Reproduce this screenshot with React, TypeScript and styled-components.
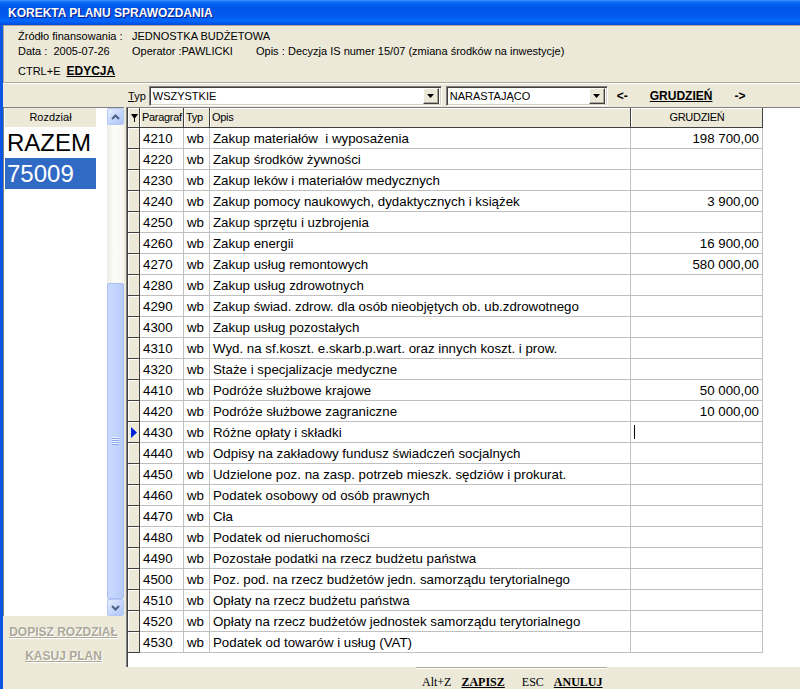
import React from 'react';
import styled, { createGlobalStyle } from 'styled-components';

const GlobalStyle = createGlobalStyle`
  html, body {
    margin: 0;
    padding: 0;
    background: #ece9d8;
    overflow: hidden;
  }
  * {
    box-sizing: border-box;
  }
`;

const SANS = `"Liberation Sans", Arial, sans-serif`;
const SERIF = `"Liberation Serif", "Times New Roman", serif`;

const Window = styled.div`
  width: 800px;
  height: 689px;
  display: flex;
  flex-direction: column;
  background: #ece9d8;
  font-family: ${SANS};
  color: #000;
  overflow: hidden;
`;

const TitleBar = styled.div`
  height: 25px;
  flex-shrink: 0;
  display: flex;
  align-items: center;
  padding-left: 8px;
  color: #fff;
  font-size: 12px;
  font-weight: bold;
  text-shadow: 1px 1px 0 #0a1883;
  background: linear-gradient(
    to bottom,
    #3d95ff 0%,
    #0a6af5 8%,
    #0055e8 30%,
    #0058ee 60%,
    #0466fb 85%,
    #0048d8 100%
  );
`;

const Body = styled.div`
  flex: 1;
  display: flex;
  flex-direction: column;
  border-left: 3px solid #0b55e4;
  min-height: 0;
`;

const InfoPanel = styled.div`
  height: 58px;
  flex-shrink: 0;
  border-top: 1px solid #aca899;
  border-left: 1px solid #aca899;
  border-bottom: 1px solid #aca899;
  box-shadow: 0 1px 0 #fff;
  padding: 3px 0 0 14px;
  font-size: 11px;
`;

const InfoRow = styled.div`
  display: grid;
  grid-template-columns: 114px 124px 32px auto;
  height: 15px;
  line-height: 15px;
  white-space: pre;
`;

const ShortcutRow = styled.div`
  display: flex;
  gap: 6px;
  height: 15px;
  line-height: 15px;
  margin-top: 5px;
`;

const ShortcutKey = styled.span`
  font-weight: bold;
  text-decoration: underline;
  font-size: 12px;
`;

const FilterBar = styled.div`
  height: 24px;
  flex-shrink: 0;
  display: flex;
  align-items: center;
  padding: 2px 0 0 125px;
  font-size: 11px;
`;

const Label = styled.span`
  margin-right: 3px;
  & u {
    text-decoration: underline;
  }
`;

const Combo = styled.div<{ $width: number }>`
  width: ${({ $width }) => $width}px;
  height: 20px;
  margin-right: 4px;
  display: flex;
  align-items: center;
  background: #fff;
  border-top: 1px solid #808080;
  border-left: 1px solid #808080;
  border-bottom: 1px solid #fff;
  border-right: 1px solid #fff;
  box-shadow: inset 1px 1px 0 #404040, inset -1px -1px 0 #d4d0c8;
`;

const ComboText = styled.span`
  flex: 1;
  padding-left: 3px;
`;

const ComboButton = styled.div`
  width: 16px;
  height: 16px;
  margin-right: 2px;
  background: #ece9d8;
  border-top: 1px solid #fff;
  border-left: 1px solid #fff;
  border-right: 1px solid #404040;
  border-bottom: 1px solid #404040;
  box-shadow: inset -1px -1px 0 #aca899;
  display: flex;
  align-items: center;
  justify-content: center;
`;

const NavArrow = styled.span<{ $ml: number }>`
  margin-left: ${({ $ml }) => $ml}px;
  font-size: 12px;
  font-weight: bold;
`;

const NavMonth = styled.span`
  margin-left: 22px;
  font-size: 12px;
  font-weight: bold;
  text-decoration: underline;
`;

const Main = styled.div`
  flex: 1;
  display: flex;
  min-height: 0;
`;

const LeftColumn = styled.div`
  width: 121px;
  margin-right: 2px;
  display: flex;
  flex-direction: column;
`;

const ListBox = styled.div`
  height: 509px;
  display: flex;
  background: #fff;
  border-top: 1px solid #808080;
  border-left: 1px solid #808080;
`;

const ListContent = styled.div`
  flex: 1;
  padding-left: 1px;
`;

const ListHeader = styled.div`
  width: 91px;
  height: 19px;
  line-height: 18px;
  text-align: center;
  font-size: 11px;
  background: #ece9d8;
`;

const ListItem = styled.div<{ $selected?: boolean }>`
  width: 91px;
  height: 31px;
  line-height: 31px;
  padding-left: 2px;
  font-size: 24px;
  background: ${({ $selected }) => ($selected ? '#316ac5' : 'transparent')};
  color: ${({ $selected }) => ($selected ? '#fff' : '#000')};
`;

const ScrollBar = styled.div`
  width: 17px;
  display: flex;
  flex-direction: column;
  background: linear-gradient(to right, #eeede5, #fcfcfa 40%, #f7f6f1);
`;

const ScrollButton = styled.div`
  height: 17px;
  flex-shrink: 0;
  border: 1px solid #b4c8f6;
  border-radius: 2px;
  background: linear-gradient(to bottom right, #e6eefc, #c1d3fb 60%, #b0c6f7);
  display: flex;
  align-items: center;
  justify-content: center;
`;

const Track = styled.div`
  flex: 1;
  display: flex;
  flex-direction: column;
`;

const TrackSpace = styled.div`
  height: 158px;
  flex-shrink: 0;
`;

const Thumb = styled.div`
  flex: 1;
  border: 1px solid #a8bef4;
  border-radius: 2px;
  background: linear-gradient(to right, #cad8fc, #c3d4fd 50%, #b7caf8);
  display: flex;
  align-items: center;
  justify-content: center;
`;

const Grip = styled.div`
  width: 7px;
  height: 8px;
  background: repeating-linear-gradient(
    to bottom,
    #eef3fe 0px,
    #eef3fe 1px,
    #8aa6e8 1px,
    #8aa6e8 2px
  );
`;

const SideActions = styled.div`
  display: flex;
  flex-direction: column;
  align-items: center;
  padding-top: 9px;
  gap: 10px;
`;

const DisabledAction = styled.span`
  font-size: 12px;
  font-weight: bold;
  text-decoration: underline;
  color: #aca899;
  text-shadow: 1px 1px 0 #fff;
  line-height: 14px;
`;

const RightColumn = styled.div`
  flex: 1;
  display: flex;
  flex-direction: column;
  min-width: 0;
`;

const GridPane = styled.div`
  height: 560px;
  flex-shrink: 0;
  background: #fff;
  border-top: 1px solid #808080;
  border-left: 1px solid #808080;
  box-shadow: inset 1px 0 0 #404040;
  padding-left: 1px;
  overflow: hidden;
`;

const Row = styled.div`
  display: grid;
  grid-template-columns: 12px 44px 26px 421px 132px 1fr;
  height: 21px;
  font-size: 13.3px;
`;

const HeaderRow = styled(Row)`
  height: 20px;
  font-size: 11px;
  letter-spacing: -0.3px;
`;

const HeaderCell = styled.div<{ $center?: boolean }>`
  background: #ece9d8;
  border-right: 1px solid #404040;
  border-bottom: 1px solid #404040;
  box-shadow: inset 1px 1px 0 #fff;
  padding: 0 1px 0 2px;
  line-height: 19px;
  white-space: nowrap;
  overflow: hidden;
  display: flex;
  align-items: center;
  justify-content: ${({ $center }) => ($center ? 'center' : 'flex-start')};
`;

const Indicator = styled.div`
  background: #ece9d8;
  border-right: 1px solid #404040;
  border-bottom: 1px solid #404040;
  box-shadow: inset 1px 1px 0 #fff;
  display: flex;
  align-items: center;
  justify-content: center;
`;

const Cell = styled.div<{ $right?: boolean }>`
  border-right: 1px solid #c0c0c0;
  border-bottom: 1px solid #c0c0c0;
  padding: 1px 3px 0;
  line-height: 19px;
  white-space: pre;
  overflow: hidden;
  text-align: ${({ $right }) => ($right ? 'right' : 'left')};
`;

const Filler = styled.div`
  background: #fff;
`;

const Caret = styled.span`
  display: inline-block;
  width: 1px;
  height: 14px;
  background: #000;
  vertical-align: middle;
  margin-top: -2px;
`;

const Footer = styled.div`
  flex: 1;
  padding-left: 290px;
`;

const FooterGroup = styled.div`
  width: 191px;
  border-top: 1px solid #aca899;
  box-shadow: inset 0 1px 0 #fff;
  padding: 7px 0 0 6px;
  display: flex;
  font-family: ${SERIF};
  font-size: 12px;
`;

const FooterText = styled.span<{ $ml?: number }>`
  margin-left: ${({ $ml }) => $ml ?? 0}px;
`;

const FooterKey = styled.span<{ $ml: number }>`
  margin-left: ${({ $ml }) => $ml}px;
  font-weight: bold;
  text-decoration: underline;
`;

type Line = { code: string; name: string; value?: string };

const rows: Line[] = [
  { code: '4210', name: 'Zakup materiałów  i wyposażenia', value: '198 700,00' },
  { code: '4220', name: 'Zakup środków żywności' },
  { code: '4230', name: 'Zakup leków i materiałów medycznych' },
  { code: '4240', name: 'Zakup pomocy naukowych, dydaktycznych i książek', value: '3 900,00' },
  { code: '4250', name: 'Zakup sprzętu i uzbrojenia' },
  { code: '4260', name: 'Zakup energii', value: '16 900,00' },
  { code: '4270', name: 'Zakup usług remontowych', value: '580 000,00' },
  { code: '4280', name: 'Zakup usług zdrowotnych' },
  { code: '4290', name: 'Zakup świad. zdrow. dla osób nieobjętych ob. ub.zdrowotnego' },
  { code: '4300', name: 'Zakup usług pozostałych' },
  { code: '4310', name: 'Wyd. na sf.koszt. e.skarb.p.wart. oraz innych koszt. i prow.' },
  { code: '4320', name: 'Staże i specjalizacje medyczne' },
  { code: '4410', name: 'Podróże służbowe krajowe', value: '50 000,00' },
  { code: '4420', name: 'Podróże służbowe zagraniczne', value: '10 000,00' },
  { code: '4430', name: 'Różne opłaty i składki' },
  { code: '4440', name: 'Odpisy na zakładowy fundusz świadczeń socjalnych' },
  { code: '4450', name: 'Udzielone poz. na zasp. potrzeb mieszk. sędziów i prokurat.' },
  { code: '4460', name: 'Podatek osobowy od osób prawnych' },
  { code: '4470', name: 'Cła' },
  { code: '4480', name: 'Podatek od nieruchomości' },
  { code: '4490', name: 'Pozostałe podatki na rzecz budżetu państwa' },
  { code: '4500', name: 'Poz. pod. na rzecz budżetów jedn. samorządu terytorialnego' },
  { code: '4510', name: 'Opłaty na rzecz budżetu państwa' },
  { code: '4520', name: 'Opłaty na rzecz budżetów jednostek samorządu terytorialnego' },
  { code: '4530', name: 'Podatek od towarów i usług (VAT)' },
];

const CURRENT = '4430';

const DownTriangle = () => (
  <svg width="7" height="4" viewBox="0 0 7 4">
    <polygon points="0,0 7,0 3.5,4" fill="#000" />
  </svg>
);

const SortMark = () => (
  <svg width="7" height="9" viewBox="0 0 7 9">
    <polygon points="0,1 7,1 3.5,6" fill="#000" />
    <rect x="3" y="5" width="1" height="4" fill="#000" />
  </svg>
);

const RowPointer = () => (
  <svg width="6" height="11" viewBox="0 0 6 11">
    <polygon points="0,0 6,5.5 0,11" fill="#0022dd" />
  </svg>
);

const Chevron = ({ up }: { up?: boolean }) => (
  <svg width="9" height="6" viewBox="0 0 9 6">
    <polyline
      points={up ? '1,5 4.5,1.5 8,5' : '1,1 4.5,4.5 8,1'}
      fill="none"
      stroke="#4d6185"
      strokeWidth="2"
    />
  </svg>
);

export default function App() {
  return (
    <>
      <GlobalStyle />
      <Window>
        <TitleBar>KOREKTA PLANU SPRAWOZDANIA</TitleBar>
        <Body>
          <InfoPanel>
            <InfoRow>
              <span>Źródło finansowania :</span>
              <span>JEDNOSTKA BUDŻETOWA</span>
            </InfoRow>
            <InfoRow>
              <span>Data :  2005-07-26</span>
              <span>Operator :PAWLICKI</span>
              <span>Opis :</span>
              <span>Decyzja IS numer 15/07 (zmiana środków na inwestycje)</span>
            </InfoRow>
            <ShortcutRow>
              <span>CTRL+E</span>
              <ShortcutKey>EDYCJA</ShortcutKey>
            </ShortcutRow>
          </InfoPanel>

          <FilterBar>
            <Label>
              <u>T</u>yp
            </Label>
            <Combo $width={293}>
              <ComboText>WSZYSTKIE</ComboText>
              <ComboButton>
                <DownTriangle />
              </ComboButton>
            </Combo>
            <Combo $width={162}>
              <ComboText>NARASTAJĄCO</ComboText>
              <ComboButton>
                <DownTriangle />
              </ComboButton>
            </Combo>
            <NavArrow $ml={5}>&lt;-</NavArrow>
            <NavMonth>GRUDZIEŃ</NavMonth>
            <NavArrow $ml={22}>-&gt;</NavArrow>
          </FilterBar>

          <Main>
            <LeftColumn>
              <ListBox>
                <ListContent>
                  <ListHeader>Rozdział</ListHeader>
                  <ListItem>RAZEM</ListItem>
                  <ListItem $selected>75009</ListItem>
                </ListContent>
                <ScrollBar>
                  <ScrollButton>
                    <Chevron up />
                  </ScrollButton>
                  <Track>
                    <TrackSpace />
                    <Thumb>
                      <Grip />
                    </Thumb>
                  </Track>
                  <ScrollButton>
                    <Chevron />
                  </ScrollButton>
                </ScrollBar>
              </ListBox>
              <SideActions>
                <DisabledAction>DOPISZ ROZDZIAŁ</DisabledAction>
                <DisabledAction>KASUJ PLAN</DisabledAction>
              </SideActions>
            </LeftColumn>

            <RightColumn>
              <GridPane>
                <HeaderRow>
                  <HeaderCell $center>
                    <SortMark />
                  </HeaderCell>
                  <HeaderCell>Paragraf</HeaderCell>
                  <HeaderCell>Typ</HeaderCell>
                  <HeaderCell>Opis</HeaderCell>
                  <HeaderCell $center>GRUDZIEŃ</HeaderCell>
                  <Filler />
                </HeaderRow>
                {rows.map((r) => (
                  <Row key={r.code}>
                    <Indicator>{r.code === CURRENT && <RowPointer />}</Indicator>
                    <Cell>{r.code}</Cell>
                    <Cell>wb</Cell>
                    <Cell>{r.name}</Cell>
                    <Cell $right={r.code !== CURRENT}>
                      {r.code === CURRENT ? <Caret /> : r.value}
                    </Cell>
                    <Filler />
                  </Row>
                ))}
              </GridPane>
              <Footer>
                <FooterGroup>
                  <FooterText>Alt+Z</FooterText>
                  <FooterKey $ml={10}>ZAPISZ</FooterKey>
                  <FooterText $ml={17}>ESC</FooterText>
                  <FooterKey $ml={10}>ANULUJ</FooterKey>
                </FooterGroup>
              </Footer>
            </RightColumn>
          </Main>
        </Body>
      </Window>
    </>
  );
}
